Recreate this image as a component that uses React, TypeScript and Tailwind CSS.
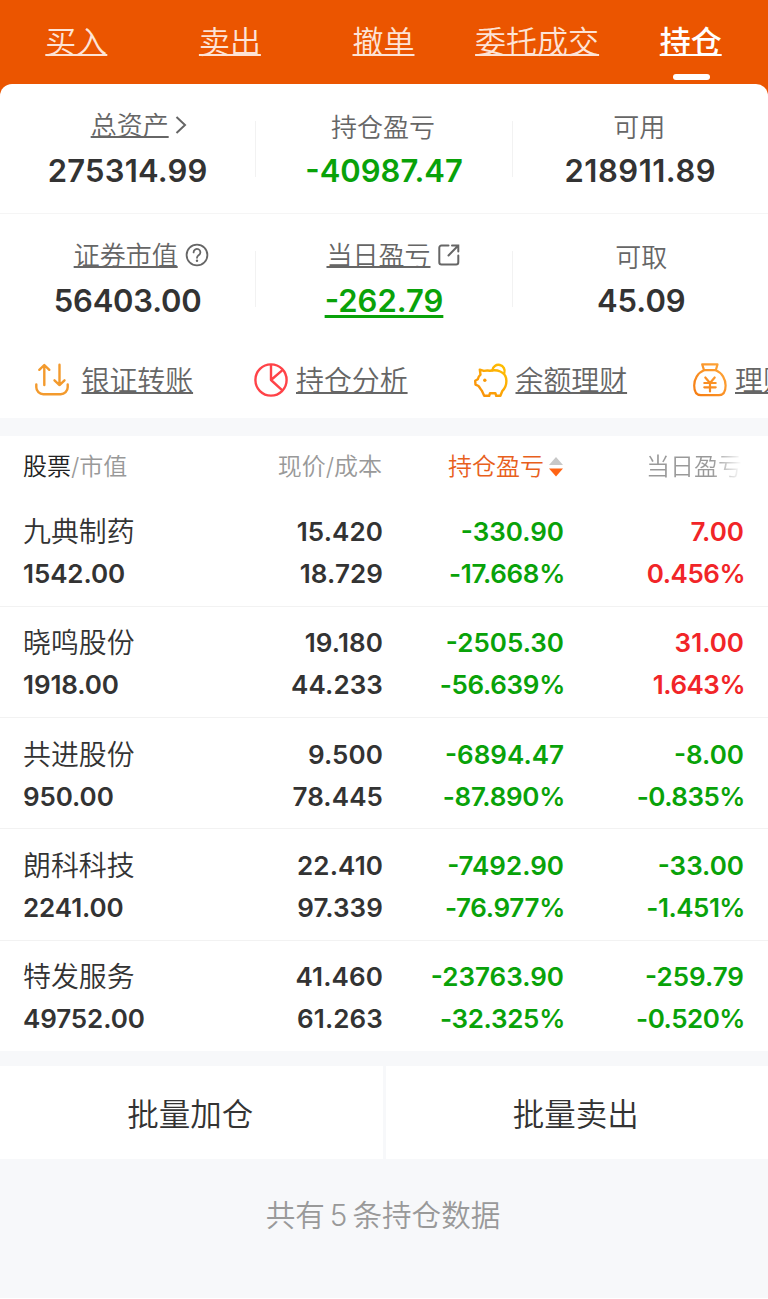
import { ReactNode } from 'react';

type Tone = 'up' | 'down';

interface Holding {
  name: string;
  value: string;
  price: string;
  cost: string;
  profit: string;
  profitRate: string;
  dayProfit: string;
  dayRate: string;
  dayTone: Tone;
}

const TABS = ['买入', '卖出', '撤单', '委托成交', '持仓'];
const ACTIVE_TAB = '持仓';

const HOLDINGS: Holding[] = [
  { name: '九典制药', value: '1542.00', price: '15.420', cost: '18.729', profit: '-330.90', profitRate: '-17.668%', dayProfit: '7.00', dayRate: '0.456%', dayTone: 'up' },
  { name: '晓鸣股份', value: '1918.00', price: '19.180', cost: '44.233', profit: '-2505.30', profitRate: '-56.639%', dayProfit: '31.00', dayRate: '1.643%', dayTone: 'up' },
  { name: '共进股份', value: '950.00', price: '9.500', cost: '78.445', profit: '-6894.47', profitRate: '-87.890%', dayProfit: '-8.00', dayRate: '-0.835%', dayTone: 'down' },
  { name: '朗科科技', value: '2241.00', price: '22.410', cost: '97.339', profit: '-7492.90', profitRate: '-76.977%', dayProfit: '-33.00', dayRate: '-1.451%', dayTone: 'down' },
  { name: '特发服务', value: '49752.00', price: '41.460', cost: '61.263', profit: '-23763.90', profitRate: '-32.325%', dayProfit: '-259.79', dayRate: '-0.520%', dayTone: 'down' },
];

const LINK = 'underline [text-decoration-skip-ink:none]';

function TransferIcon() {
  return (
    <svg width="34" height="34" viewBox="0 0 34 34" fill="none" stroke="#f39a2d" strokeWidth="2.4" strokeLinecap="round" strokeLinejoin="round">
      <path d="M9.3 22V2.5M4.3 6.8l5-4.8 5 4.8M24.5 1.8V22M19.5 17.3l5 4.8 5-4.8" />
      <path d="M1.3 21.5v2.7a7 7 0 0 0 7 7h17.4a7 7 0 0 0 7-7v-2.7" />
    </svg>
  );
}

function PieIcon() {
  return (
    <svg width="34" height="34" viewBox="0 0 34 34" fill="none" stroke="#ff4348" strokeWidth="2.4" strokeLinejoin="round">
      <circle cx="17" cy="17" r="15.6" />
      <path d="M17 1.3V17l11.2-9.7M17 17l11.6 10.6" />
    </svg>
  );
}

function PiggyIcon() {
  return (
    <svg width="34" height="34" viewBox="0 0 34 34" fill="none" stroke="url(#piggy)" strokeWidth="2.4" strokeLinecap="round" strokeLinejoin="round">
      <defs>
        <linearGradient id="piggy" x1="34" y1="0" x2="0" y2="34" gradientUnits="userSpaceOnUse">
          <stop stopColor="#ffc400" />
          <stop offset="1" stopColor="#f88a0c" />
        </linearGradient>
      </defs>
      <path d="M5.8 6.7l4 1.2c2-.4 4-.4 6-.2 3.500-.7 7.500-.6 10.500.8 4 1.700 6.100 5.200 6.100 9.600 0 4.700-2 8-4.200 10.100L26.400 32.800h-4.200l-.8-2.600h-5.400l-.8 2.600h-5l-2.200-4.900c-1.500-1.500-2.300-3.400-3.500-4.900l-3-1.400-.3-3.800 2.600-1.500c.4-2 1.200-3.300 2.700-4.600z" />
      <path d="M18.3 7.3a6.2 6.2 0 1 1 12 2.8" />
      <circle cx="10.800" cy="17.3" r="1.7" fill="#f99a0a" stroke="none" />
    </svg>
  );
}

function MoneyBagIcon() {
  return (
    <svg width="34" height="34" viewBox="0 0 34 34" fill="none" stroke="url(#bag)" strokeWidth="2.2" strokeLinecap="round" strokeLinejoin="round">
      <defs>
        <linearGradient id="bag" x1="34" y1="0" x2="0" y2="34" gradientUnits="userSpaceOnUse">
          <stop stopColor="#ffaa3d" />
          <stop offset="1" stopColor="#f57a10" />
        </linearGradient>
      </defs>
      <path d="M9.2 1.4h15.3l-1.7 5.8H11z" />
      <path d="M11 7.2C4.5 9.800 1.200 16.500 1.200 22.500c0 6 2.200 9.600 6.600 9.600h18.200c4.400 0 6.600-3.600 6.600-9.600 0-6-3.300-12.700-9.800-15.300" />
      <path d="M12.3 14.500l4.700 5.500 4.700-5.500M11.300 20h11.400M11.300 24.300h11.400M17 20v8.500" />
    </svg>
  );
}

function HelpIcon() {
  return (
    <svg className="-mt-0.5" width="24" height="24" viewBox="0 0 24 24" fill="none" stroke="#666" strokeWidth="1.8" strokeLinecap="round">
      <circle cx="12" cy="12" r="10.4" />
      <path d="M8.6 9.4a3.4 3.4 0 1 1 5.3 2.7c-1.3.9-1.9 1.5-1.9 2.7" />
      <circle cx="12" cy="17.8" r="1.2" fill="#666" stroke="none" />
    </svg>
  );
}

function ShareIcon() {
  return (
    <svg className="-mt-0.5" width="22" height="22" viewBox="0 0 22 22" fill="none" stroke="#666" strokeWidth="2" strokeLinecap="round">
      <path d="M10.5 1.5H3.5a2.2 2.2 0 0 0-2.2 2.2v14.600a2.2 2.2 0 0 0 2.2 2.2h14.600a2.2 2.2 0 0 0 2.2-2.2V11.5" />
      <path d="M14 1.5h6.3v6M20 1.8l-9.5 9.7" />
    </svg>
  );
}

function ChevronIcon() {
  return (
    <svg className="-mt-0.5" width="12" height="18" viewBox="0 0 12 18" fill="none" stroke="#666" strokeWidth="2">
      <path d="M1.5 1l8.5 8-8.5 8" />
    </svg>
  );
}

interface StatProps {
  label: string;
  value: string;
  icon?: ReactNode;
  labelClass?: string;
  valueClass?: string;
}

function Stat({ label, value, icon, labelClass = '', valueClass = 'text-[#333] tracking-[0.2px]' }: StatProps) {
  return (
    <div className="flex flex-1 flex-col items-center">
      <div className={`flex h-8 items-center text-[26px] leading-8 text-[#666] ${labelClass}`}>
        <span className={icon ? `${LINK} decoration-2 underline-offset-[1px]` : ''}>{label}</span>
        {icon}
      </div>
      <div className={`mt-[9px] text-[31px] font-semibold leading-10 ${valueClass}`}>{value}</div>
    </div>
  );
}

function QuickLink({ icon, label, textClass = 'ml-2' }: { icon: ReactNode; label: string; textClass?: string }) {
  return (
    <div className="flex w-[219.5px] shrink-0 items-start">
      <span className="mt-px">{icon}</span>
      <span className={`mt-px whitespace-nowrap text-[27.9px] leading-9 text-[#666] decoration-2 underline-offset-[1px] ${LINK} ${textClass}`}>{label}</span>
    </div>
  );
}

function HoldingRow({ item, last }: { item: Holding; last: boolean }) {
  const dayColor = item.dayTone === 'up' ? 'text-[#f12528]' : 'text-[#09a209]';
  return (
    <div className={`flex px-6 pt-[15.5px] text-[26px] font-semibold leading-[42px] text-[#333] ${last ? 'h-[110.5px]' : 'h-[111.25px] border-b border-[#f2f2f2]'}`}>
      <div className="-ml-px w-[170px]">
        <div className="text-[27.9px] font-[350]">{item.name}</div>
        <div className="tracking-[-0.1px]">{item.value}</div>
      </div>
      <div className="w-[190px] text-right">
        <div className="tracking-[0.1px]">{item.price}</div>
        <div className="tracking-[0.1px]">{item.cost}</div>
      </div>
      <div className="w-[181px] text-right text-[#09a209]">
        <div>{item.profit}</div>
        <div className="-mr-px tracking-[-0.3px]">{item.profitRate}</div>
      </div>
      <div className={`w-[180px] text-right ${dayColor}`}>
        <div>{item.dayProfit}</div>
        <div className="-mr-px tracking-[-0.5px]">{item.dayRate}</div>
      </div>
    </div>
  );
}

export default function App() {
  return (
    <div className="h-[1299px] w-[768px] overflow-hidden border-b border-white bg-[#f7f8fa] font-['Inter','Noto_Sans_CJK_SC',sans-serif] font-[350]">
      <div className="bg-[#eb5500]">
        <nav className="grid h-[84px] grid-cols-5">
          {TABS.map(tab => {
            const active = tab === ACTIVE_TAB;
            return (
              <div key={tab} className="flex flex-col items-center pt-[22px]">
                <span className={`-ml-px text-[31px] leading-10 decoration-2 underline-offset-[1px] ${LINK} ${active ? 'font-medium text-white' : 'text-[#fde3d6]'}`}>
                  {tab}
                </span>
                {active && <span className="mt-3 h-1.5 w-[37px] rounded-full bg-white" />}
              </div>
            );
          })}
        </nav>

        <section className="h-[334px] overflow-hidden rounded-t-xl bg-white">
          <div className="flex h-[130px] items-start border-b border-[#f5f5f5] pt-[26px]">
            <Stat label="总资产" value="275314.99" labelClass="pl-[22px] gap-1.5" icon={<ChevronIcon />} />
            <div className="mt-[11px] h-14 w-px bg-[#f2f2f2]" />
            <Stat label="持仓盈亏" value="-40987.47" labelClass="pt-1 pr-0.5" valueClass="text-[#09a209]" />
            <div className="mt-[11px] h-14 w-px bg-[#f2f2f2]" />
            <Stat label="可用" value="218911.89" labelClass="pt-1 pr-0.5" valueClass="text-[#333] tracking-[0.5px]" />
          </div>
          <div className="flex h-[127px] items-start pt-[26px]">
            <Stat label="证券市值" value="56403.00" labelClass="pl-[27px] gap-[7px]" icon={<HelpIcon />} valueClass="text-[#333] tracking-[-0.2px]" />
            <div className="mt-[11px] h-14 w-px bg-[#f2f2f2]" />
            <Stat
              label="当日盈亏"
              value="-262.79"
              labelClass="pl-[18px] gap-[7px]"
              icon={<ShareIcon />}
              valueClass={`text-[#09a209] ${LINK} decoration-[3px] underline-offset-[3px]`}
            />
            <div className="mt-[11px] h-14 w-px bg-[#f2f2f2]" />
            <Stat label="可取" value="45.09" labelClass="pt-1 pl-0.5" valueClass="pl-0.5 text-[#333]" />
          </div>
          <div className="flex h-[77px] items-start overflow-hidden pl-[34.5px] pt-[21px]">
            <QuickLink icon={<TransferIcon />} label="银证转账" textClass="ml-[13px]" />
            <QuickLink icon={<PieIcon />} label="持仓分析" />
            <QuickLink icon={<PiggyIcon />} label="余额理财" />
            <QuickLink icon={<MoneyBagIcon />} label="理财" />
          </div>
        </section>
      </div>

      <section className="mt-[18px] bg-white">
        <div className="flex h-[59.5px] px-6 pt-[11px] text-[24px] leading-10 text-[#999]">
          <div className="-ml-px w-[170px]">
            <span className="text-[#222]">股票</span>/市值
          </div>
          <div className="-ml-px mr-px w-[190px] text-right">现价/成本</div>
          <div className="flex h-10 w-[181px] items-center justify-end gap-1 text-[#e8601c]">
            持仓盈亏
            <svg width="16" height="20" viewBox="0 0 16 20">
              <path d="M8 0l7 8H1z" fill="#c8c8c8" />
              <path d="M1 11.5h14L8 19.5z" fill="#ff6414" />
            </svg>
          </div>
          <div className="-ml-0.5 w-[180px] bg-linear-to-r from-[#999] from-83% to-white bg-clip-text text-right text-transparent">当日盈亏</div>
        </div>
        {HOLDINGS.map((item, i) => (
          <HoldingRow key={item.name} item={item} last={i === HOLDINGS.length - 1} />
        ))}
      </section>

      <div className="mt-[15px] flex h-[93px] gap-[3px] text-[31.5px] text-[#333]">
        <button className="flex-1 bg-white pr-0.5 pt-1">批量加仓</button>
        <button className="flex-1 bg-white pr-0.5 pt-1">批量卖出</button>
      </div>

      <div className="flex justify-center gap-[5px] pt-9 pr-0.5 text-[29.6px] leading-10 text-[#999]">
        <span>共有</span>
        <span>5</span>
        <span>条持仓数据</span>
      </div>
    </div>
  );
}
